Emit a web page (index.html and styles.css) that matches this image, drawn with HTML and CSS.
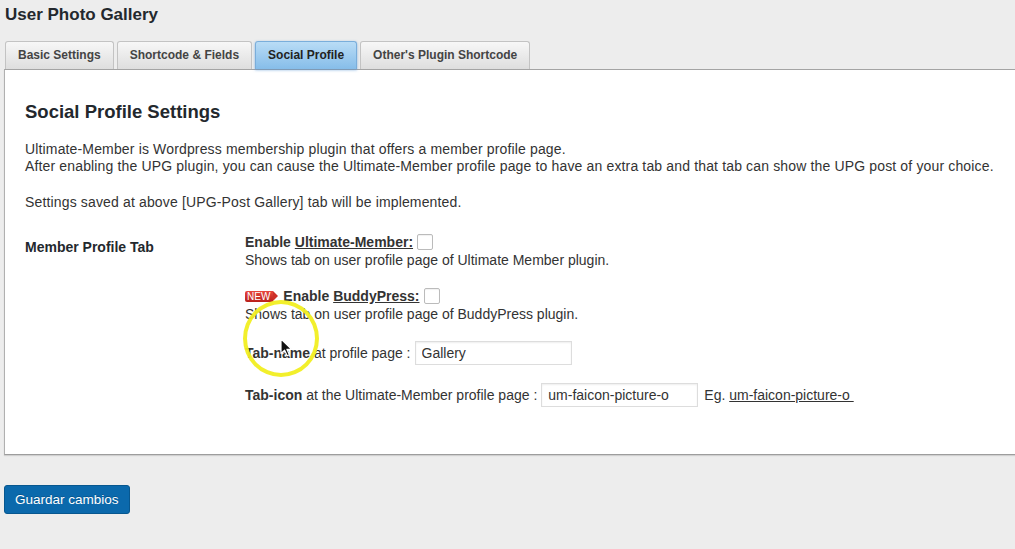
FILE: index.html
```html
<!DOCTYPE html>
<html lang="en">
<head>
  <meta charset="UTF-8">
  <meta name="viewport" content="width=device-width, initial-scale=1.0">
  <title>User Photo Gallery</title>
  <link rel="stylesheet" href="styles.css">
</head>
<body>
  <div class="wrap">
    <h1 class="page-title">User Photo Gallery</h1>

    <!-- Settings tabs -->
    <div class="tabs">
      <a class="tab">Basic Settings</a>
      <a class="tab">Shortcode &amp; Fields</a>
      <a class="tab active">Social Profile</a>
      <a class="tab">Other's Plugin Shortcode</a>
    </div>

    <div class="panel">
      <h2>Social Profile Settings</h2>
      <p class="intro">Ultimate-Member is Wordpress membership plugin that offers a member profile page.<br>After enabling the UPG plugin, you can cause the Ultimate-Member profile page to have an extra tab and that tab can show the UPG post of your choice.</p>
      <p class="note">Settings saved at above [UPG-Post Gallery] tab will be implemented.</p>

      <div class="form-row">
        <div class="form-label">Member Profile Tab</div>
        <div class="form-field">
          <div class="option">
            <div class="check-line"><b>Enable <a class="plain-link">Ultimate-Member:</a></b><input type="checkbox" class="checkbox"></div>
            <div class="line">Shows tab on user profile page of Ultimate Member plugin.</div>
          </div>
          <div class="option">
            <div class="check-line"><span class="badge-new">NEW</span><b>Enable <a class="plain-link">BuddyPress:</a></b><input type="checkbox" class="checkbox"></div>
            <div class="line">Shows tab on user profile page of BuddyPress plugin.</div>
          </div>
          <div class="input-line">
            <span><b>Tab-name</b> at profile page :</span>
            <input type="text" class="text-input" value="Gallery">
          </div>
          <div class="input-line">
            <span><b>Tab-icon</b> at the Ultimate-Member profile page :</span>
            <input type="text" class="text-input" value="um-faicon-picture-o">
            <span>Eg. <a class="plain-link">um-faicon-picture-o&nbsp;</a></span>
          </div>
        </div>
      </div>
    </div>

    <button class="button-primary">Guardar cambios</button>
  </div>

  <!-- Screen recording click highlight and pointer -->
  <div class="cursor-ring"></div>
  <svg class="cursor" width="13" height="19" viewBox="0 0 13 19">
    <path d="M1 1 L1 15.5 L4.6 12.2 L7.2 17.8 L9.4 16.8 L6.9 11.3 L11.6 11.3 Z" fill="#111" stroke="#fff" stroke-width="1.2" stroke-linejoin="round"/>
  </svg>
</body>
</html>
```

FILE: styles.css
```css
body {
  margin: 0;
  background-color: #ededed;
  font-family: "Liberation Sans", Arial, sans-serif;
  font-size: 14px;
  color: #333333;
  overflow: hidden;
}
.wrap {
  padding-top: 5px;
}
.page-title {
  margin: 0 0 0 5px;
  font-size: 17px;
  line-height: 20px;
  font-weight: bold;
  color: #23282d;
}
/* Tabs */
.tabs {
  display: flex;
  gap: 3px;
  margin: 16px 0 0 5px;
}
.tab {
  box-sizing: border-box;
  height: 28px;
  padding: 0 12px;
  line-height: 26px;
  font-size: 12px;
  font-weight: bold;
  color: #444444;
  background: linear-gradient(#f7f7f7, #dedede);
  border: 1px solid #c3c3c3;
  border-bottom: none;
  border-radius: 3px 3px 0 0;
}
.tab.active {
  color: #222222;
  background: linear-gradient(#b9dcf6, #86bde9);
  border-color: #7aaedb;
  box-shadow: 0 1px 3px rgba(70, 140, 210, 0.6);
}
/* Panel */
.panel {
  margin-left: 4px;
  padding: 31px 20px 47px;
  background-color: #ffffff;
  border-top: 1px solid #a4a4a4;
  border-left: 1px solid #b0b0b0;
  border-bottom: 1px solid #9d9d9d;
  box-shadow: 0 1px 1px rgba(0, 0, 0, 0.12);
}
.panel h2 {
  margin: 0;
  font-size: 18.5px;
  line-height: 22px;
  font-weight: bold;
  color: #23282d;
}
.intro {
  margin: 18px 0 0;
  line-height: 17px;
  letter-spacing: 0.15px;
}
.note {
  margin: 19px 0 0;
  line-height: 17px;
  letter-spacing: 0.15px;
}
.form-row {
  display: flex;
  margin-top: 22px;
}
.form-label {
  width: 220px;
  flex-shrink: 0;
  padding-top: 5px;
  line-height: 18px;
  font-weight: bold;
  color: #23282d;
}
.form-field {
  display: flex;
  flex-direction: column;
  gap: 18px;
  line-height: 18px;
}
.check-line {
  display: flex;
  align-items: center;
  height: 18px;
}
.plain-link {
  color: #333333;
  text-decoration: underline;
}
.checkbox {
  appearance: none;
  box-sizing: border-box;
  width: 16px;
  height: 16px;
  margin: 0 0 0 4px;
  background-color: #ffffff;
  border: 1px solid #bbbbbb;
  border-radius: 2px;
  box-shadow: inset 0 1px 1px rgba(0, 0, 0, 0.06);
}
.badge-new {
  position: relative;
  display: inline-block;
  height: 11px;
  margin: 0 10px 0 0;
  padding: 0 3px 0 2px;
  font-size: 10px;
  line-height: 11px;
  color: #ffffff;
  background: linear-gradient(#e8463d, #b9201b);
  border-radius: 2px 0 0 2px;
}
.badge-new::after {
  content: "";
  position: absolute;
  top: 0;
  right: -5px;
  border-top: 5.5px solid transparent;
  border-bottom: 5.5px solid transparent;
  border-left: 5px solid #cd2f28;
}
.input-line {
  display: flex;
  align-items: center;
  height: 24px;
}
.text-input {
  box-sizing: border-box;
  width: 157px;
  height: 24px;
  margin: 0 6px 0 4px;
  padding: 0 6px;
  font-family: "Liberation Sans", Arial, sans-serif;
  font-size: 14px;
  color: #333333;
  background-color: #ffffff;
  border: 1px solid #dddddd;
  box-shadow: inset 0 1px 2px rgba(0, 0, 0, 0.07);
}
/* Save button */
.button-primary {
  display: block;
  box-sizing: border-box;
  height: 29px;
  margin: 30px 0 0 4px;
  padding: 0 10px;
  font-family: "Liberation Sans", Arial, sans-serif;
  font-size: 13.5px;
  color: #ffffff;
  background-color: #0b69ac;
  border: 1px solid #07578f;
  border-radius: 3px;
  text-shadow: 0 -1px 0 rgba(0, 0, 0, 0.2);
}
/* Click highlight */
.cursor-ring {
  position: absolute;
  left: 243px;
  top: 300px;
  width: 76px;
  height: 77px;
  box-sizing: border-box;
  border: 4px solid #f1ee21;
  border-radius: 50%;
  opacity: 0.95;
}
.cursor {
  position: absolute;
  left: 280px;
  top: 338px;
}
```
